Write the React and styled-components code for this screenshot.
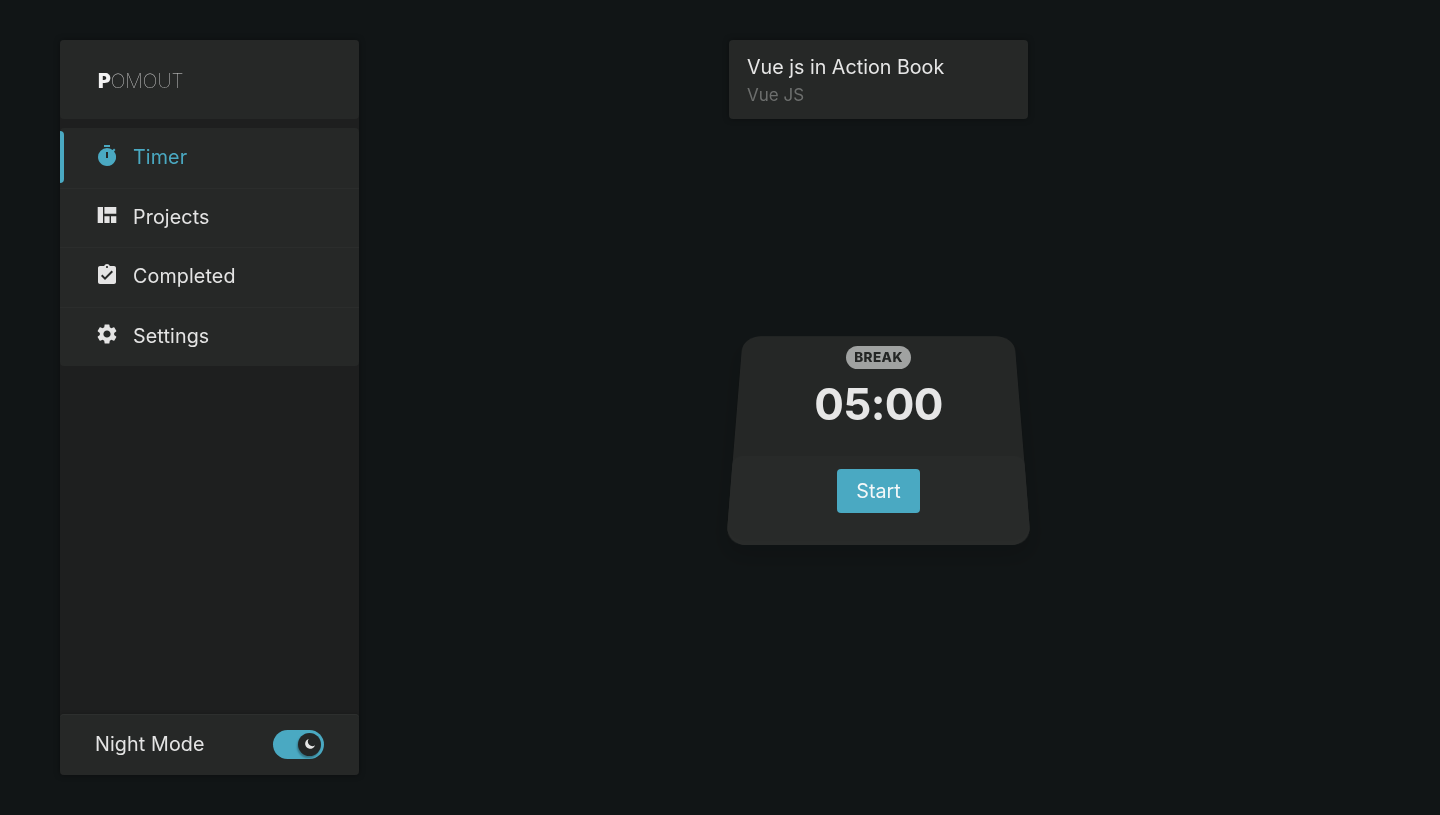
import React from 'react'
import styled, { createGlobalStyle } from 'styled-components'
import { MdTimer, MdAssignmentTurnedIn, MdSettings } from 'react-icons/md'

const GlobalStyle = createGlobalStyle`
  html, body {
    margin: 0;
    height: 100%;
    background-color: #111516;
  }
  body {
    font-family: Inter, "Liberation Sans", sans-serif;
    font-weight: 370;
    color: #e6e6e6;
  }
`

const Page = styled.div`
  display: flex;
  box-sizing: border-box;
  height: 815px;
  padding: 40px 42px 40px 60px;
  overflow: hidden;
  will-change: transform;
`

const Sidebar = styled.aside`
  display: flex;
  flex-direction: column;
  width: 299px;
  flex-shrink: 0;
  background-color: #1e1f1f;
  border-radius: 4px;
  box-shadow: 0 0 6px rgba(0, 0, 0, 0.35);
`

const Brand = styled.div`
  display: flex;
  align-items: center;
  height: 79px;
  padding: 2px 0 0 38px;
  box-sizing: border-box;
  background-color: #262827;
  border-radius: 4px;
  font-size: 19.5px;
  font-weight: 100;
  letter-spacing: 0;
  color: #d6d6d6;

  b {
    font-weight: 900;
    color: #f2f2f2;
  }
`

const Nav = styled.nav`
  display: flex;
  flex-direction: column;
  margin-top: 9px;
  background-color: #262827;
  border-radius: 4px;
`

const NavItem = styled.a`
  position: relative;
  display: flex;
  align-items: center;
  gap: 14px;
  box-sizing: border-box;
  height: 59.5px;
  padding: 0 0 1px 35px;
  font-size: 19.7px;
  letter-spacing: 0.12px;
  color: ${(props) => (props.$active ? '#4aa9c2' : '#e4e4e4')};
  box-shadow: ${(props) => (props.$last ? 'none' : '0 1px 0 #2b2d2c')};

  svg {
    font-size: 24px;
    margin-top: -3px;
    flex-shrink: 0;
  }

  ${(props) =>
    props.$active &&
    `
    &::before {
      content: '';
      position: absolute;
      left: 0;
      top: 3px;
      bottom: 5px;
      width: 4px;
      background-color: #4aa9c2;
      border-radius: 0 4px 4px 0;
    }
  `}
`

const NightRow = styled.div`
  display: flex;
  align-items: center;
  justify-content: space-between;
  height: 61px;
  margin-top: auto;
  padding: 0 35px 1px 35px;
  background-color: #262827;
  box-sizing: border-box;
  border-radius: 4px;
  font-size: 19.7px;
  letter-spacing: 0.12px;
  color: #e4e4e4;
  box-shadow: inset 0 1px 0 #2d2f2e, 0 -1px 3px rgba(0, 0, 0, 0.15);
`

const Toggle = styled.div`
  position: relative;
  width: 51px;
  height: 29px;
  background-color: #4aa9c2;
  border-radius: 15px;
`

const ToggleKnob = styled.div`
  position: absolute;
  top: 3px;
  right: 3px;
  display: flex;
  align-items: center;
  justify-content: center;
  width: 23px;
  height: 23px;
  background-color: #242626;
  border-radius: 50%;
  box-shadow: -1px 2px 2px rgba(0, 0, 0, 0.3);
`

const Main = styled.main`
  flex: 1;
  display: flex;
  flex-direction: column;
  align-items: center;
`

const TaskCard = styled.div`
  box-sizing: border-box;
  width: 299px;
  height: 79px;
  padding: 15px 18px;
  background-color: #262827;
  border-radius: 4px;
  box-shadow: 0 0 6px rgba(0, 0, 0, 0.35);
`

const TaskTitle = styled.div`
  font-size: 19.7px;
  line-height: 24px;
  color: #e6e6e6;
`

const TaskProject = styled.div`
  margin-top: 6px;
  font-size: 17px;
  line-height: 20px;
  color: #6d6f6e;
`

const TimerCard = styled.section`
  position: relative;
  display: flex;
  flex-direction: column;
  width: 305px;
  height: 209px;
  margin-top: 217px;

  /* keycap shape, narrower at the top */
  &::before {
    content: '';
    position: absolute;
    left: 0;
    right: 0;
    bottom: 0;
    height: 255px;
    background-color: #252726;
    border-radius: 20px;
    transform-origin: 50% 100%;
    transform: perspective(800px) rotateX(23deg);
    box-shadow: 0 12px 24px 6px rgba(0, 0, 0, 0.14);
  }
`

const TimerTop = styled.div`
  position: relative;
  display: flex;
  flex-direction: column;
  align-items: center;
  height: 120px;
  padding-top: 10px;
  box-sizing: border-box;
`

const Badge = styled.span`
  box-sizing: border-box;
  height: 23px;
  padding: 0 8px;
  background-color: #a0a2a1;
  border-radius: 12px;
  font-size: 13.5px;
  line-height: 23px;
  font-weight: 800;
  letter-spacing: 0.4px;
  color: #242625;
`

const Clock = styled.div`
  margin-top: 8px;
  font-size: 44px;
  line-height: 54px;
  font-weight: 700;
  letter-spacing: -0.7px;
  color: #e6e6e6;
`

const TimerBottom = styled.div`
  position: relative;
  flex: 1;
  display: flex;
  justify-content: center;
  padding-top: 13px;

  &::before {
    content: '';
    position: absolute;
    left: 0;
    right: 0;
    bottom: 0;
    height: 101px;
    background-color: #282a29;
    border-radius: 10px 10px 20px 20px;
    transform-origin: 50% 100%;
    transform: perspective(800px) rotateX(22.5deg);
    box-shadow: inset 0 -5px 4px rgba(255, 255, 255, 0.012);
  }
`

const StartButton = styled.button`
  position: relative;
  width: 83px;
  height: 44px;
  padding: 0;
  border: none;
  border-radius: 4px;
  background-color: #4aa9c2;
  font-family: inherit;
  font-weight: 370;
  font-size: 19.7px;
  color: #f4f8f9;
`

const Moon = () => (
  <svg width="12" height="12" viewBox="0 0 24 24" fill="#e6e6e6">
    <path d="M9.5 2a10 10 0 1 0 12.4 12.6A9 9 0 0 1 9.5 2z" />
  </svg>
)

// taller than the material view_quilt glyph, so drawn by hand
const QuiltIcon = () => (
  <svg width="24" height="24" viewBox="0 0 24 24" fill="currentColor">
    <path d="M2.7 4h5.3v16H2.7zM9.4 4h11.9v6.7H9.4zM9.4 13.3h5.2V20H9.4zM16 13.3h5.3V20H16z" />
  </svg>
)

const links = [
  { label: 'Timer', icon: MdTimer, active: true },
  { label: 'Projects', icon: QuiltIcon },
  { label: 'Completed', icon: MdAssignmentTurnedIn },
  { label: 'Settings', icon: MdSettings },
]

const App = () => (
  <Page>
    <GlobalStyle />
    <Sidebar>
      <Brand>
        <span><b>P</b>OMOUT</span>
      </Brand>
      <Nav>
        {links.map(({ label, icon: Icon, active }, i) => (
          <NavItem key={label} $active={active} $last={i === links.length - 1}>
            <Icon />
            {label}
          </NavItem>
        ))}
      </Nav>
      <NightRow>
        Night Mode
        <Toggle>
          <ToggleKnob>
            <Moon />
          </ToggleKnob>
        </Toggle>
      </NightRow>
    </Sidebar>
    <Main>
      <TaskCard>
        <TaskTitle>Vue js in Action Book</TaskTitle>
        <TaskProject>Vue JS</TaskProject>
      </TaskCard>
      <TimerCard>
        <TimerTop>
          <Badge>BREAK</Badge>
          <Clock>05:00</Clock>
        </TimerTop>
        <TimerBottom>
          <StartButton>Start</StartButton>
        </TimerBottom>
      </TimerCard>
    </Main>
  </Page>
)

export default App
